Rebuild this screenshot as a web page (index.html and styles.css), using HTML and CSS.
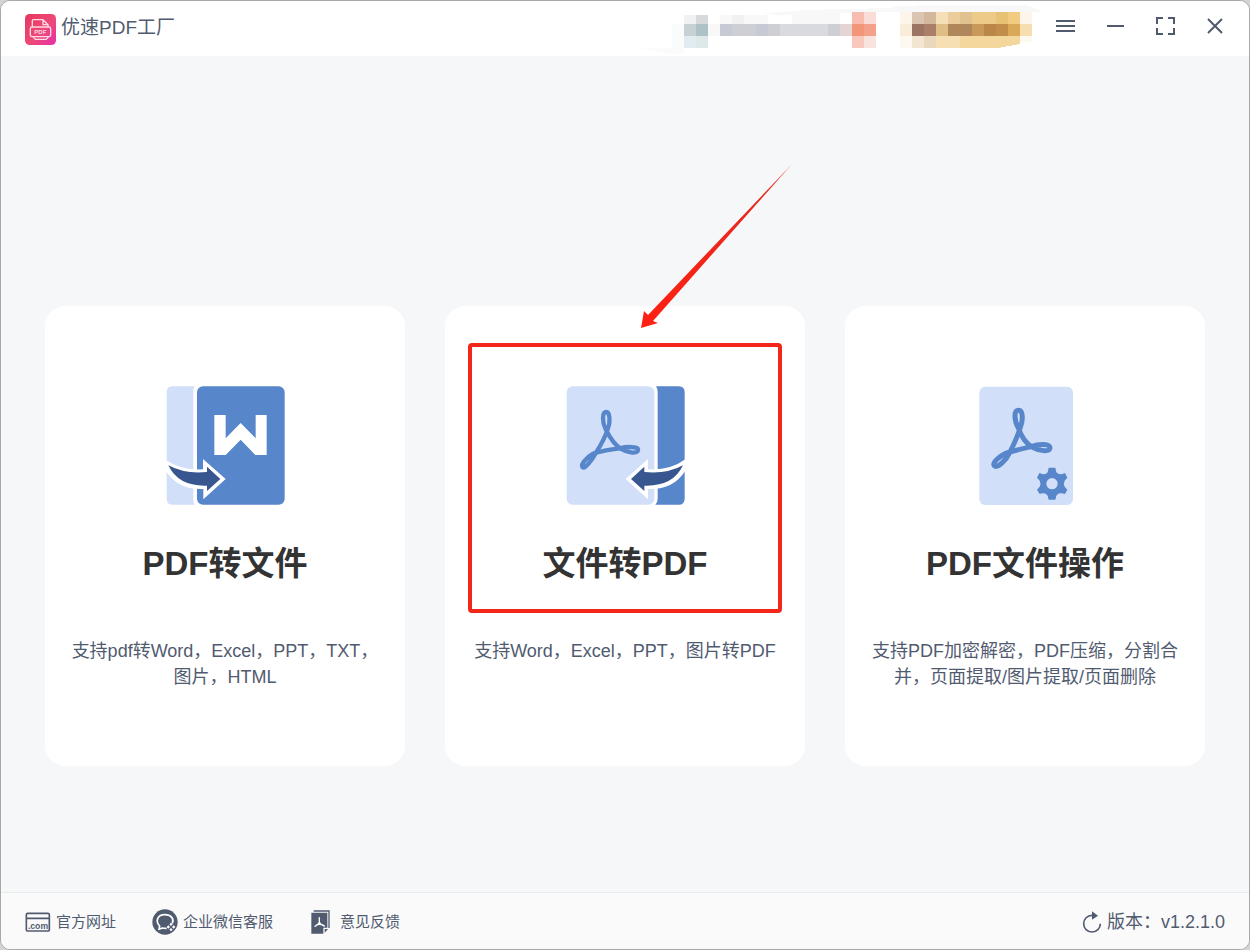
FILE: index.html
```html
<!DOCTYPE html>
<html lang="zh-CN">
<head>
<meta charset="utf-8">
<meta name="viewport" content="width=device-width, initial-scale=1">
<title>优速PDF工厂</title>
<link rel="stylesheet" href="styles.css">
</head>
<body>
<div class="window">
  <header class="titlebar">
    <div class="brand">
      <svg class="brand-logo" viewBox="0 0 93 93" aria-hidden="true">
        <defs>
          <linearGradient id="logo-fill" x1="0" y1="0" x2="1" y2="1">
            <stop offset="0" stop-color="#e8365c"/>
            <stop offset="0.55" stop-color="#ec4a78"/>
            <stop offset="1" stop-color="#e62fa8"/>
          </linearGradient>
        </defs>
        <rect width="93" height="93" rx="14" fill="url(#logo-fill)"/>
        <g fill="none" stroke="#ffd9e4" stroke-width="4" stroke-linejoin="round" stroke-linecap="round">
          <path d="M22 38V20q0-3 3-3h29l15 15v6M54 17v15h15M24 68l7 8h33l7-8"/>
          <rect x="16" y="39" width="61" height="29" rx="5"/>
        </g>
        <text class="logo-text" x="46" y="61" text-anchor="middle">PDF</text>
      </svg>
      <span class="brand-name">优速PDF工厂</span>
    </div>
    <svg class="account" viewBox="0 0 400 54" shape-rendering="crispEdges" aria-hidden="true">
      <path fill="#f8f8f8" d="M120 14L140 12L165 10L205 9L252 8L256 6L295 5H385L392 7L400 10V12H230L145 15Z"/>
      <path fill="#fbfbfb" d="M0 48H44V54H28Z"/>
      <path fill="#fafcfb" d="M32 24h12v12H32zM32 36h12v12H32z"/>
      <path fill="#f0f1f2" d="M44 15h12v9H44z"/><path fill="#d7dadd" d="M56 15h12v9H56z"/>
      <path fill="#c7d0d3" d="M44 24h12v12H44z"/><path fill="#adc2c6" d="M56 24h12v12H56z"/>
      <path fill="#e2ebef" d="M44 36h12v12H44z"/><path fill="#dce9e8" d="M56 36h12v12H56z"/>
      <path fill="#f8f8f9" d="M68 24h12v12H68zM80 15h12v9H80zM104 15h24v9h-24zM152 13h48v11h-48z"/>
      <path fill="#f0f1f3" d="M92 15h12v9H92z"/>
      <path fill="#c7cad4" d="M80 24h12v12H80zM116 24h12v12h-12z"/>
      <path fill="#cdcfd5" d="M92 24h24v12H92zM128 24h12v12h-12zM188 24h12v12h-12z"/>
      <path fill="#d8dadf" d="M140 24h48v12h-48z"/>
      <path fill="#e4d4d4" d="M200 24h12v12h-12z"/>
      <path fill="#f8bdb0" d="M212 12h12v12h-12z"/><path fill="#fbddd8" d="M224 12h12v12h-12z"/>
      <path fill="#f29579" d="M212 24h12v12h-12z"/><path fill="#f3a188" d="M224 24h12v12h-12z"/>
      <path fill="#f8c8bf" d="M212 36h12v12h-12z"/><path fill="#f9e3de" d="M224 36h12v12h-12z"/>
      <path fill="#fdf5e9" d="M260 12h12v12h-12zM380 12h12v12h-12z"/>
      <path fill="#f9ecd8" d="M260 24h12v12h-12z"/><path fill="#fdf8f0" d="M260 36h12v12h-12zM380 36h12v6h-12z"/>
      <path fill="#d9c5b1" d="M272 12h12v12h-12z"/><path fill="#d3b89d" d="M284 12h12v12h-12z"/>
      <path fill="#f4dfb7" d="M296 12h12v12h-12z"/><path fill="#eacd9b" d="M308 12h12v12h-12z"/>
      <path fill="#e1c18d" d="M320 12h12v12h-12z"/><path fill="#edca87" d="M332 12h24v12h-24z"/>
      <path fill="#e8c174" d="M356 12h12v12h-12z"/><path fill="#f0cb80" d="M368 12h12v12h-12z"/>
      <path fill="#9c7463" d="M272 24h12v12h-12z"/><path fill="#aa7e69" d="M284 24h12v12h-12z"/>
      <path fill="#e1bd86" d="M296 24h12v12h-12z"/><path fill="#b0875b" d="M308 24h24v12h-24z"/>
      <path fill="#c99959" d="M332 24h12v12h-12z"/><path fill="#ba8748" d="M344 24h12v12h-12z"/>
      <path fill="#c18d4a" d="M356 24h12v12h-12z"/><path fill="#d9a958" d="M368 24h12v12h-12z"/>
      <path fill="#f6deae" d="M380 24h12v12h-12z"/>
      <path fill="#f2e6d3" d="M272 36h12v12h-12z"/><path fill="#ead8bd" d="M284 36h12v12h-12z"/>
      <path fill="#f5dfb3" d="M296 36h24v12h-24z"/>
      <path fill="#f3d79d" d="M320 36h60v8l-22 4h-38z"/>
    </svg>
    <nav class="controls" aria-label="窗口控制">
      <button class="control" type="button" aria-label="菜单">
        <svg class="control-icon" viewBox="0 0 24 24"><path d="M3 7h19M3 12h19M3 17h19"/></svg>
      </button>
      <button class="control" type="button" aria-label="最小化">
        <svg class="control-icon" viewBox="0 0 24 24"><path d="M4 12h17"/></svg>
      </button>
      <button class="control" type="button" aria-label="最大化">
        <svg class="control-icon" viewBox="0 0 24 24"><path d="M4 10V4h6M15 4h6v6M21 14v6h-6M10 20H4v-6"/></svg>
      </button>
      <button class="control" type="button" aria-label="关闭">
        <svg class="control-icon" viewBox="0 0 24 24"><path d="M5 5l14 14M19 5L5 19"/></svg>
      </button>
    </nav>
  </header>

  <main class="content">
    <button class="card" type="button">
      <svg class="card-icon" viewBox="45 48 360 360" aria-hidden="true">
        <path fill="#d2dff8" d="M68 49h66q-4 6-4 16v324q0 10 4 15H68q-18 0-18-18V67q0-18 18-18z"/>
        <rect x="141" y="49" width="263" height="355" rx="18" fill="#5786ca"/>
        <path fill="#fff" d="M193 135h34v70l45-46 45 46v-70h33v120h-34l-44-46-45 46h-34z"/>
        <path fill="#fff" d="M47 270Q95 302 159 298V267L227 327L160 388V357Q85 360 47 302Z"/>
        <path fill="#38568f" d="M55 286Q105 313 171 306V290L211 327L171 363V347Q85 350 55 286Z"/>
      </svg>
      <span class="card-title">PDF转文件</span>
      <span class="card-text">支持pdf转Word，Excel，PPT，TXT，图片，HTML</span>
    </button>

    <button class="card" type="button">
      <svg class="card-icon" viewBox="45 48 360 360" aria-hidden="true">
        <rect x="50" y="49" width="263" height="355" rx="18" fill="#d2dff8"/>
        <path fill="#5786ca" d="M318 49h68q18 0 18 18v319q0 18-18 18h-70q7-7 7-18V67q0-11-5-18z"/>
        <path fill="none" stroke="#5786ca" stroke-width="13" stroke-linejoin="round" d="M138 248C152 226 166 200 173 178C182 158 180 126 169 126C156 126 156 156 167 178C178 200 190 222 212 236C228 246 262 254 264 240C266 228 228 230 208 235C186 238 160 242 138 248C118 254 90 282 97 291C104 300 126 270 138 248Z"/>
        <path fill="#fff" d="M406 268Q360 302 294 298V267L227 327L294 388V357Q370 360 406 302Z"/>
        <path fill="#38568f" d="M399 286Q350 313 283 306V290L243 327L283 363V347Q369 350 399 286Z"/>
      </svg>
      <span class="card-title">文件转PDF</span>
      <span class="card-text">支持Word，Excel，PPT，图片转PDF</span>
      <span class="highlight"></span>
      <svg class="pointer" viewBox="0 0 154 166" aria-hidden="true">
        <defs>
          <linearGradient id="pointer-fill" x1="1" y1="0" x2="0" y2="1">
            <stop offset="0" stop-color="#fa2318" stop-opacity="0.6"/>
            <stop offset="0.15" stop-color="#e32b20"/>
            <stop offset="1" stop-color="#ff2012"/>
          </linearGradient>
        </defs>
        <path fill="url(#pointer-fill)" d="M1 165L4 148L8 152L153 0L13 158L18 160Z"/>
      </svg>
    </button>

    <button class="card" type="button">
      <svg class="card-icon" viewBox="15 48 360 360" aria-hidden="true">
        <rect x="58" y="50" width="281" height="355" rx="18" fill="#d2dff8"/>
        <path fill="none" stroke="#5786ca" stroke-width="15" stroke-linejoin="round" d="M150 246C162 222 174 196 181 172C190 150 189 121 176 121C161 121 162 150 175 174C184 200 196 218 216 231C236 242 268 248 270 234C270 220 236 221 214 230C192 235 170 240 150 246C126 252 94 278 103 287C112 296 138 272 150 246Z"/>
        <path fill="#5786ca" fill-rule="evenodd" d="M266 293h20l3 14q8 8 18 5l8-3 7 14-8 9q-5 9 0 18l8 9-7 13-10-2q-12-1-16 7l-3 12h-20l-3-12q-5-8-16-7l-8 2-8-13 8-9q5-9 0-18l-8-9 7-14 9 3q10 3 16-5zM276 324a17 17 0 1 0 0 34a17 17 0 1 0 0-34z"/>
      </svg>
      <span class="card-title">PDF文件操作</span>
      <span class="card-text">支持PDF加密解密，PDF压缩，分割合并，页面提取/图片提取/页面删除</span>
    </button>
  </main>

  <footer class="statusbar">
    <a class="link" href="#site">
      <svg class="link-icon" viewBox="0 0 78 78" aria-hidden="true">
        <g fill="none" stroke="#515b70" stroke-width="5"><rect x="4" y="13" width="69" height="53" rx="4"/><path d="M4 28h69"/></g>
        <text class="icon-text" x="39" y="59" text-anchor="middle">.com</text>
      </svg>
      官方网址
    </a>
    <a class="link" href="#service">
      <svg class="link-icon" viewBox="0 0 78 78" aria-hidden="true">
        <circle cx="39" cy="39" r="38" fill="#515b70"/>
        <path fill="none" stroke="#fff" stroke-width="5" stroke-linejoin="round" d="M44 58q-7 1-13-1l-10 4 2-10C8 36 18 17 38 17s29 13 23 26"/>
        <path fill="#fff" d="M57 41l5 5-5 5-5-5zM49 49l5 5-5 5-5-5zM65 49l5 5-5 5-5-5zM57 57l5 5-5 5-5-5z"/>
      </svg>
      企业微信客服
    </a>
    <a class="link" href="#feedback">
      <svg class="link-icon" viewBox="0 0 78 78" aria-hidden="true">
        <path fill="none" stroke="#515b70" stroke-width="4" d="M14 6h46v51"/>
        <path fill="#515b70" d="M7 11h48v45H43v18H7zM47 60h10L47 71z"/>
        <path fill="none" stroke="#fff" stroke-width="4" stroke-linecap="round" d="M31 26v14q-3 8-13 12M31 40q4 8 15 11M22 48q9-4 20 0"/>
      </svg>
      意见反馈
    </a>
    <button class="version" type="button">
      <svg class="version-icon" viewBox="0 0 60 66" aria-hidden="true">
        <path fill="none" stroke="#515b70" stroke-width="5" d="M36 13H30A25 25 0 1 0 55 38"/>
        <path fill="#515b70" d="M30 1L48 14L30 26Z"/>
      </svg>
      版本：v1.2.1.0
    </button>
  </footer>
</div>
</body>
</html>
```

FILE: styles.css
```css
* {
  box-sizing: border-box;
}

body {
  margin: 0;
  background: #d4d4d4;
  color: #515b70;
  font-family: "Liberation Sans", "Noto Sans CJK SC", sans-serif;
}

button {
  margin: 0;
  padding: 0;
  border: 0;
  background: none;
  color: inherit;
  font: inherit;
  cursor: pointer;
}

.window {
  display: flex;
  flex-direction: column;
  min-height: 100vh;
  overflow: hidden;
  border: 1px solid #a8a8a8;
  border-radius: 10px;
  background: #f5f7f9;
}

.titlebar {
  display: flex;
  align-items: flex-start;
  height: 55px;
  padding-right: 9px;
  background: #fff;
}

.brand {
  display: flex;
  flex: 1;
  gap: 5px;
  padding: 13px 0 0 24px;
}

.brand-logo {
  width: 31px;
  height: 31px;
}

.logo-text {
  fill: #ffd9e4;
  font-size: 18px;
  font-weight: 700;
}

.brand-name {
  font-size: 19px;
  line-height: 28px;
}

.account {
  flex: none;
  width: 400px;
  height: 54px;
  margin-top: -1px;
}

.controls {
  display: flex;
}

.control {
  display: grid;
  place-items: center;
  width: 50px;
  height: 50px;
}

.control-icon {
  width: 24px;
  height: 24px;
  fill: none;
  stroke: #515b70;
  stroke-width: 2;
}

.content {
  display: grid;
  flex: 1;
  grid-template-columns: repeat(3, 1fr);
  align-items: start;
  gap: 40px;
  padding: 250px 44px 40px;
}

.card {
  position: relative;
  display: flex;
  flex-direction: column;
  align-items: center;
  min-height: 460px;
  padding: 80px 24px 24px;
  border-radius: 20px;
  background: #fff;
}

.card-icon {
  width: 120px;
  height: 120px;
}

.card-title {
  margin-top: 34px;
  color: #333;
  font-size: 33px;
  font-weight: 700;
  line-height: 48px;
}

.card-text {
  margin-top: 50px;
  font-size: 18px;
  line-height: 26px;
}

.highlight {
  position: absolute;
  top: 37px;
  right: 23px;
  left: 23px;
  height: 270px;
  border: 4px solid #f4261a;
  border-radius: 4px;
}

.pointer {
  position: absolute;
  bottom: calc(100% - 23px);
  left: calc(50% + 15px);
  width: 154px;
  height: 166px;
}

.statusbar {
  display: flex;
  align-items: center;
  gap: 36px;
  height: 57px;
  padding: 2px 24px 0;
  border-top: 1px solid #e9eaec;
  background: #fafafa;
}

.link {
  display: flex;
  align-items: center;
  gap: 5px;
  color: inherit;
  font-size: 15px;
  line-height: 24px;
  text-decoration: none;
}

.link-icon {
  width: 26px;
  height: 26px;
}

.icon-text {
  fill: #515b70;
  font-size: 26px;
  font-weight: 700;
}

.version {
  display: flex;
  align-items: center;
  gap: 5px;
  margin-left: auto;
  font-size: 18px;
  line-height: 24px;
}

.version-icon {
  width: 20px;
  height: 22px;
}
```
